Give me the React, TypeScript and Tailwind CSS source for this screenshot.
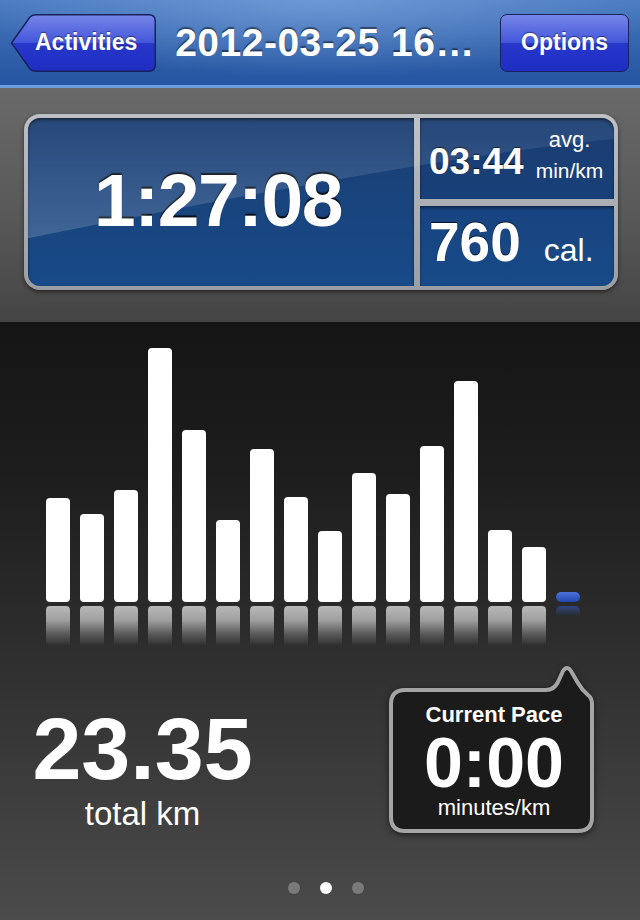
import React from 'react'

const bars = [104, 88, 112, 254, 172, 82, 153, 105, 71, 129, 108, 156, 221, 72, 55]

function BackButton() {
  return (
    <button className="relative flex h-[58px] w-[146px] shrink-0 items-center pl-[25px]">
      <svg className="absolute inset-0" width="146" height="58" viewBox="0 0 146 58">
        <defs>
          <linearGradient id="btnGrad" x1="0" y1="0" x2="0" y2="1">
            <stop offset="0" stopColor="#7686e8" />
            <stop offset="0.5" stopColor="#4356da" />
            <stop offset="0.5" stopColor="#2637ca" />
            <stop offset="1" stopColor="#1e2ec2" />
          </linearGradient>
        </defs>
        <path
          d="M1.5 29 L20 3 Q22 0.75 26 0.75 H139 Q145.25 0.75 145.25 7 V51 Q145.25 57.25 139 57.25 H26 Q22 57.25 20 55 Z"
          fill="url(#btnGrad)"
          stroke="#18225e"
          strokeWidth="1.5"
        />
      </svg>
      <span className="relative text-[23px] font-bold leading-none text-white [text-shadow:0_-1px_1px_rgba(0,0,0,0.45)]">
        Activities
      </span>
    </button>
  )
}

function PaceBubble() {
  return (
    <div className="relative ml-[104px] mt-[19px] h-[168px] w-[205px]">
      <svg
        className="absolute inset-0 drop-shadow-[0_2px_3px_rgba(0,0,0,0.55)]"
        width="205"
        height="168"
        viewBox="0 0 205 168"
      >
        <path
          d="M16 25 H157 Q165 25 169 17 L174 6 Q178 0 182 6 L189 18 Q193 25 199 30 Q203 33 203 39 V152 Q203 166 189 166 H16 Q2 166 2 152 V39 Q2 25 16 25 Z"
          fill="#1b1b1b"
          stroke="#a4a4a4"
          strokeWidth="4"
        />
      </svg>
      <div className="relative flex flex-col items-center pl-[5px] pt-[39px] text-white">
        <div className="text-[22px] font-bold leading-none">Current Pace</div>
        <div className="mt-[11px] text-[70px] font-bold leading-[52px]">0:00</div>
        <div className="mt-[8px] text-[22px] leading-none">minutes/km</div>
      </div>
    </div>
  )
}

export default function App() {
  return (
    <div className="h-[920px] w-[640px] overflow-hidden bg-[#2a2a2a] font-['Liberation_Sans',Arial,sans-serif]">
      {/* nav bar */}
      <div className="flex h-[85px] items-center bg-[radial-gradient(ellipse_55%_90%_at_50%_0%,rgba(150,190,240,0.45),transparent),linear-gradient(180deg,#4b7bc0_0%,#3565ae_50%,#2554a0_100%)] pl-[10px] pr-[11px]">
        <BackButton />
        <div className="flex-1 pr-[6px] text-center text-[39px] font-bold leading-none tracking-[0.5px] text-white [text-shadow:0_-2px_1px_rgba(0,0,0,0.45)]">
          2012-03-25 16…
        </div>
        <button className="flex h-[58px] w-[129px] shrink-0 items-center justify-center rounded-[7px] border-[1.5px] border-[#18225e] bg-[linear-gradient(180deg,#7686e8_0%,#4356da_50%,#2637ca_50%,#1e2ec2_100%)] text-[23px] font-bold leading-none text-white [text-shadow:0_-1px_1px_rgba(0,0,0,0.45)]">
          Options
        </button>
      </div>
      <div className="h-[3px] bg-[#6b9ee0]" />

      {/* summary panel */}
      <div className="h-[234px] bg-[linear-gradient(180deg,#696969_0%,#5a5a5a_50%,#454545_100%)] pl-[24px] pr-[22px] pt-[26px]">
        <div className="relative h-[176px] rounded-[16px] bg-[linear-gradient(180deg,#bcbfc3,#9a9da1)] p-[4px] shadow-[0_2px_4px_rgba(0,0,0,0.5)]">
          <div className="flex h-[168px] gap-[6px]">
            <div className="flex w-[386px] items-center justify-center rounded-l-[12px] bg-[linear-gradient(180deg,#1b3e72,#174a88)] pb-[3px] pr-[6px] shadow-[inset_0_2px_3px_rgba(0,0,0,0.55)]">
              <span className="text-[75px] font-bold leading-none tracking-[-1.5px] text-white [text-shadow:0_-2px_1px_rgba(0,0,0,0.85)]">
                1:27:08
              </span>
            </div>
            <div className="flex flex-1 flex-col gap-[7px]">
              <div className="flex h-[81px] items-center rounded-tr-[12px] bg-[linear-gradient(180deg,#1b3e72,#183f78)] pl-[9px] pt-[5px] text-white shadow-[inset_0_2px_3px_rgba(0,0,0,0.55)]">
                <span className="text-[37px] font-bold leading-none [text-shadow:0_-1px_1px_rgba(0,0,0,0.7)]">03:44</span>
                <div className="ml-[12px] mt-[-12px] flex flex-col items-center gap-[9px]">
                  <span className="text-[22px] leading-none">avg.</span>
                  <span className="text-[21px] leading-none">min/km</span>
                </div>
              </div>
              <div className="flex h-[80px] items-baseline rounded-br-[12px] bg-[linear-gradient(180deg,#184480,#174a88)] pl-[9px] pt-[9px] text-white shadow-[inset_0_2px_3px_rgba(0,0,0,0.45)]">
                <span className="text-[55px] font-bold leading-none [text-shadow:0_-1px_1px_rgba(0,0,0,0.7)]">760</span>
                <span className="ml-[23px] text-[32px] leading-none">cal.</span>
              </div>
            </div>
          </div>
          {/* gloss */}
          <svg
            className="pointer-events-none absolute inset-[4px]"
            width="586"
            height="168"
            viewBox="0 0 585 169"
            preserveAspectRatio="none"
          >
            <defs>
              <linearGradient id="gloss" x1="0" y1="0" x2="0" y2="1">
                <stop offset="0" stopColor="#ffffff" stopOpacity="0.05" />
                <stop offset="1" stopColor="#ffffff" stopOpacity="0.17" />
              </linearGradient>
            </defs>
            <path d="M0 0 H585 V21 Q420 36 0 121 Z" fill="url(#gloss)" />
          </svg>
        </div>
      </div>

      {/* chart + totals */}
      <div className="flex h-[598px] flex-col bg-[linear-gradient(180deg,#151515_0%,#1d1d1d_25%,#2b2b2b_50%,#4b4b4b_100%)]">
        <div className="flex h-[280px] shrink-0 items-end gap-[10px] pl-[46px]">
          {bars.map((h, i) => (
            <div key={i} className="w-[24px] rounded-[4px] bg-white" style={{ height: h }} />
          ))}
          <div className="h-[10px] w-[24px] rounded-[5px] bg-[linear-gradient(180deg,#4a72d8,#2148b0)]" />
        </div>
        <div className="mt-[4px] flex h-[40px] shrink-0 items-start gap-[10px] pl-[46px]">
          {bars.map((_, i) => (
            <div
              key={i}
              className="h-[40px] w-[24px] rounded-t-[4px] bg-[linear-gradient(180deg,#b8b8b8_0%,#a0a0a0_35%,rgba(120,120,120,0.6)_70%,rgba(60,60,60,0)_100%)]"
            />
          ))}
          <div className="h-[10px] w-[24px] rounded-t-[5px] bg-[linear-gradient(180deg,rgba(50,80,170,0.7),rgba(50,80,170,0))]" />
        </div>

        <div className="flex">
          <div className="flex w-[285px] flex-col items-center pt-[59px] text-white">
            <div className="text-[88px] font-bold leading-none">23.35</div>
            <div className="mt-[4px] text-[33px] leading-none">total km</div>
          </div>
          <PaceBubble />
        </div>

        <div className="mb-[26px] mt-auto flex justify-center gap-[20px] pl-[12px]">
          <div className="h-[12px] w-[12px] rounded-full bg-[#7a7a7a]" />
          <div className="h-[12px] w-[12px] rounded-full bg-white" />
          <div className="h-[12px] w-[12px] rounded-full bg-[#7a7a7a]" />
        </div>
      </div>
    </div>
  )
}
